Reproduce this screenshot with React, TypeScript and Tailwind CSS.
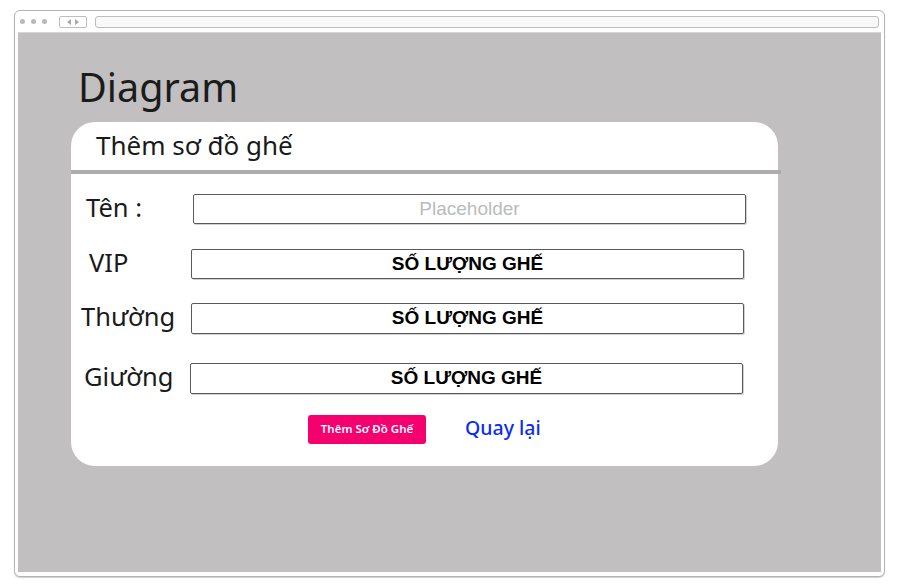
import React from "react";

const sans = { fontFamily: '"Noto Sans", "Open Sans", sans-serif' };
const arial = { fontFamily: '"Liberation Sans", Arial, sans-serif' };

function Row({ label, labelCls, inputCls, rowCls, placeholder }: { label: string; labelCls: string; inputCls: string; rowCls: string; placeholder?: boolean }) {
  return (
    <div className={`flex items-center ${rowCls}`}>
      <div className="w-[120px] h-full flex items-center">
        <span className={`text-[25.5px] text-[#1a1a1a] leading-none mt-[-3px] ${labelCls}`} style={sans}>{label}</span>
      </div>
      <div
        className={`h-full w-[553px] border border-[#5a5a5a] rounded-[2px] bg-white flex items-center justify-center shadow-[1px_1px_0_#d0d0d0] ${inputCls}`}
        style={arial}
      >
        {placeholder ? (
          <span className="text-[19px] text-[#b8bcbc]">Placeholder</span>
        ) : (
          <span className="text-[19px] font-bold text-black">SỐ LƯỢNG GHẾ</span>
        )}
      </div>
    </div>
  );
}

export default function App() {
  return (
    <div className="w-[899px] h-[586px] bg-white relative overflow-hidden">
      <div className="absolute left-[14px] top-[10px] w-[871px] h-[567px] border border-[#b4b4b4] rounded-[6px] bg-white flex flex-col shadow-[0_1px_1px_#cfcfcf]">
        <div className="h-[21px] flex items-center pl-[5px] pr-[5px]">
          <div className="flex gap-[6px] items-center">
            <span className="w-[5px] h-[5px] rounded-full bg-[#b9b9b9]" />
            <span className="w-[5px] h-[5px] rounded-full bg-[#b9b9b9]" />
            <span className="w-[5px] h-[5px] rounded-full bg-[#b9b9b9]" />
          </div>
          <div className="ml-[12px] w-[28px] h-[12px] border border-[#bdbdbd] rounded-[2px] flex items-center justify-center gap-[4px]">
            <svg width="4" height="6" viewBox="0 0 4 6"><path d="M4 0 L0 3 L4 6 Z" fill="#a8a8a8" /></svg>
            <svg width="4" height="6" viewBox="0 0 4 6"><path d="M0 0 L4 3 L0 6 Z" fill="#a8a8a8" /></svg>
          </div>
          <div className="ml-[8px] flex-1 h-[12px] border border-[#bdbdbd] rounded-[3px] bg-[#f8f8f8]" />
        </div>
        <div className="mx-[3px] mb-[4px] flex-1 bg-[#c1bfc0] border-t border-[#d6d6d6] flex flex-col">
          <div className="pl-[60px] pt-[32px] h-[89px]">
            <span className="text-[39.5px] leading-[44px] text-[#1b1b1b]" style={sans}>Diagram</span>
          </div>
          <div className="ml-[53px] w-[707px] h-[344px] bg-white rounded-[24px] flex flex-col">
            <div className="h-[48px] pl-[25px] flex items-center">
              <span className="text-[26px] text-[#1a1a1a] leading-none mt-[-2px]" style={sans}>Thêm sơ đồ ghế</span>
            </div>
            <div className="h-[4px] w-[710px] bg-[#adadad]" />
            <Row label="Tên :" labelCls="ml-[15px]" inputCls="ml-[2px]" rowCls="mt-[20px] h-[30px]" placeholder />
            <Row label="VIP" labelCls="ml-[18px]" inputCls="" rowCls="mt-[25px] h-[30px]" />
            <Row label="Thường" labelCls="ml-[10px]" inputCls="" rowCls="mt-[24px] h-[31px]" />
            <Row label="Giường" labelCls="ml-[13px]" inputCls="ml-[-1px]" rowCls="mt-[29px] h-[31px]" />
            <div className="mt-[20px] h-[30px] flex items-center pl-[237px] gap-[39px]">
              <div className="w-[118px] h-[29px] bg-[#f5006f] rounded-[3px] flex items-center justify-center">
                <span className="text-[11.5px] font-semibold text-white" style={sans}>Thêm Sơ Đồ Ghế</span>
              </div>
              <span className="text-[19.5px] font-medium text-[#0b2cf5] leading-none mt-[-2px]" style={sans}>Quay lại</span>
            </div>
          </div>
        </div>
      </div>
    </div>
  );
}
